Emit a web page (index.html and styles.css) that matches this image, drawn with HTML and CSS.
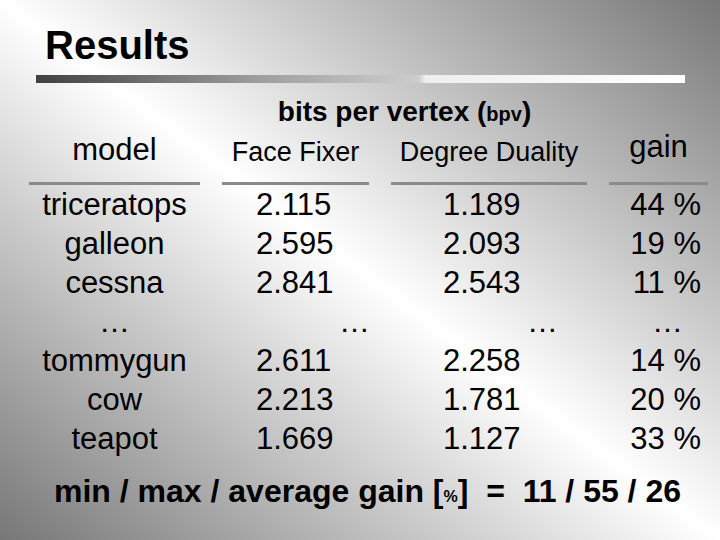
FILE: index.html
```html
<!DOCTYPE html>
<html lang="en">
<head>
    <meta charset="UTF-8">
    <title>Results</title>
    <link rel="stylesheet" href="styles.css">
</head>
<body>
    <div class="slide">
        <h1 class="title">Results</h1>
        <div class="rule"></div>

        <div class="results">
            <div class="bpv-title">bits per vertex (<span class="small">bpv</span>)</div>

            <div class="head head-model">model</div>
            <div class="head head-sub">Face Fixer</div>
            <div class="head head-sub">Degree Duality</div>
            <div class="head head-gain">gain</div>

            <div class="cell model">triceratops</div>
            <div class="cell num ff">2.115</div>
            <div class="cell num dd">1.189</div>
            <div class="cell gain">44 %</div>

            <div class="cell model">galleon</div>
            <div class="cell num ff">2.595</div>
            <div class="cell num dd">2.093</div>
            <div class="cell gain">19 %</div>

            <div class="cell model">cessna</div>
            <div class="cell num ff">2.841</div>
            <div class="cell num dd">2.543</div>
            <div class="cell gain">11 %</div>

            <div class="cell model">…</div>
            <div class="cell dots ff">…</div>
            <div class="cell dots dd">…</div>
            <div class="cell gain dots-gain">…</div>

            <div class="cell model">tommygun</div>
            <div class="cell num ff">2.611</div>
            <div class="cell num dd">2.258</div>
            <div class="cell gain">14 %</div>

            <div class="cell model">cow</div>
            <div class="cell num ff">2.213</div>
            <div class="cell num dd">1.781</div>
            <div class="cell gain">20 %</div>

            <div class="cell model">teapot</div>
            <div class="cell num ff">1.669</div>
            <div class="cell num dd">1.127</div>
            <div class="cell gain">33 %</div>
        </div>

        <p class="summary">min / max / average gain [<span class="pct">%</span>]  =  11 / 55 / 26</p>
    </div>
</body>
</html>
```

FILE: styles.css
```css
body {
    margin: 0;
    font-family: "Liberation Sans", Arial, sans-serif;
    color: #000;
}

.slide {
    width: 720px;
    height: 540px;
    overflow: hidden;
    background: linear-gradient(to bottom left, #777 0%, #fff 50%, #777 100%);
}

.title {
    margin: 0;
    padding: 25px 0 0 45px;
    font-size: 40px;
    line-height: 40px;
    font-weight: bold;
}

.rule {
    margin: 10px 0 0 36px;
    width: 649px;
    height: 8px;
    background: linear-gradient(to right, #404040 0%, #a0a0a0 35%, #cdcdcd 59%, #eeeeee 60%, #fff 100%);
}

.results {
    display: grid;
    grid-template-columns: 171px 147px 196px 99px;
    grid-template-rows: 28px 59px repeat(7, 39px);
    column-gap: 22px;
    padding-left: 29px;
    margin-top: 15px;
}

/* spans the two bpv columns, kept in its own row */
.bpv-title {
    grid-column: 1 / -1;
    margin-left: 193px;
    width: 365px;
    text-align: center;
    font-size: 28px;
    line-height: 28px;
    font-weight: bold;
    white-space: nowrap;
}

.bpv-title .small {
    font-size: 20px;
}

.head {
    align-self: end;
    text-align: center;
    border-bottom: 3px solid #8a8a8a;
    line-height: 1;
    white-space: nowrap;
}

.head-model {
    font-size: 31px;
    padding-bottom: 17px;
}

.head-sub {
    font-size: 27px;
    padding-bottom: 16px;
}

.head-gain {
    font-size: 31px;
    padding-bottom: 20px;
}

.cell {
    font-size: 31px;
    line-height: 39px;
    white-space: nowrap;
}

.model {
    text-align: center;
}

.num.ff {
    padding-left: 34px;
}

.num.dd {
    padding-left: 52px;
}

.dots.ff {
    padding-left: 117px;
}

.dots.dd {
    padding-left: 136px;
}

.gain {
    text-align: right;
    padding-right: 7px;
}

.gain.dots-gain {
    padding-right: 25px;
}

.summary {
    margin: 17px 0 0 54px;
    font-size: 32px;
    line-height: 32px;
    font-weight: bold;
    white-space: pre;
}

.summary .pct {
    font-size: 16px;
}
```
